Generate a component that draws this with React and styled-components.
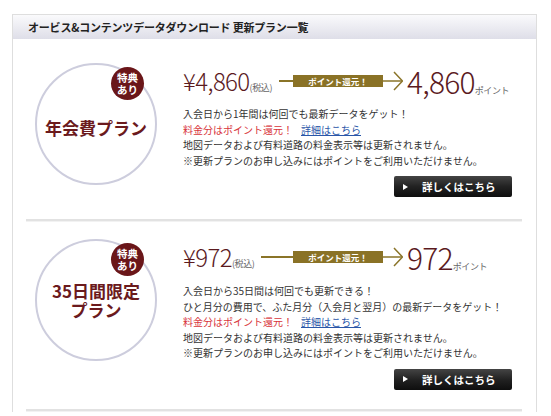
import React from "react";
import styled, { createGlobalStyle } from "styled-components";

const GlobalStyle = createGlobalStyle`
  html, body { margin: 0; padding: 0; background: #fff; }
  body { font-family: "Noto Sans CJK JP", "Noto Sans", sans-serif; color: #333; }
`;

const Page = styled.div`
  padding: 14px 14px 0 12px;
`;

const Panel = styled.div`
  width: 525px;
  box-sizing: border-box;
  border: 1px solid #dedede;
  border-bottom: none;
`;

const Header = styled.div`
  height: 24px;
  line-height: 24px;
  padding-left: 15px;
  background: linear-gradient(#fafafc, #dedee8);
  font-weight: 700;
  font-size: 11px;
  letter-spacing: -0.2px;
  color: #222;
`;

const Body = styled.div`
  padding: 24px 24px 0 22px;
`;

const Row = styled.div`
  display: flex;
  gap: 26px;
`;

const Circle = styled.div`
  position: relative;
  flex: none;
  width: 122px;
  height: 122px;
  box-sizing: border-box;
  border: 2px solid #cdcddd;
  border-radius: 50%;
  display: flex;
  align-items: center;
  justify-content: center;
  padding-top: ${(p) => p.$pt || 0}px;
`;

const PlanTitle = styled.div`
  font-weight: 700;
  font-size: 17px;
  line-height: 19px;
  color: #6b1a1d;
  text-align: center;
`;

const Badge = styled.div`
  position: absolute;
  top: 2px;
  right: 11px;
  width: 33px;
  height: 33px;
  border-radius: 50%;
  background: #6a1619;
  color: #fff;
  font-weight: 700;
  font-size: 10.5px;
  line-height: 12px;
  display: flex;
  flex-direction: column;
  align-items: center;
  justify-content: center;
`;

const Content = styled.div`
  flex: 1;
  padding-top: 2px;
`;

const PriceRow = styled.div`
  display: flex;
  align-items: center;
  height: 32px;
`;

const PriceGroup = styled.div`
  width: 110px;
  display: flex;
  align-items: center;
`;

const Price = styled.div`
  font-size: 24px;
  font-weight: 300;
  line-height: 1;
  letter-spacing: -0.6px;
  color: #5b1a1e;
  white-space: nowrap;
`;

const Small = styled.span`
  font-size: 9px;
  font-weight: 400;
  color: #666;
  letter-spacing: -0.4px;
`;

const GoldLine = styled.div`
  flex: 1;
  height: 2px;
  margin-left: 7px;
  background: #8a7428;
`;

const GoldBox = styled.div`
  width: 90px;
  height: 12px;
  background: #8a7226;
  color: #fff;
  font-weight: 700;
  font-size: 8.5px;
  line-height: 12px;
  text-align: center;
`;

const ArrowSvg = styled.svg`
  display: block;
  flex: none;
`;

const Points = styled.div`
  margin-left: 4px;
  font-size: 30px;
  font-weight: 300;
  line-height: 1;
  letter-spacing: -0.8px;
  color: #5b1a1e;
  white-space: nowrap;
`;

const Lines = styled.div`
  margin-top: ${(p) => p.$mt}px;
  font-size: 10px;
  line-height: 15.5px;
  color: #333;
  white-space: nowrap;
`;

const Red = styled.span`
  color: #d8343a;
`;

const Link = styled.a`
  color: #2a56a8;
  text-decoration: underline;
  margin-left: 8px;
`;

const ButtonRow = styled.div`
  display: flex;
  justify-content: flex-end;
  margin-top: 8px;
`;

const Button = styled.div`
  width: 118px;
  height: 21px;
  border-radius: 2px;
  background: linear-gradient(#444 0%, #222 50%, #0e0e0e 100%);
  color: #fff;
  font-weight: 700;
  font-size: 10.5px;
  line-height: 21px;
  display: flex;
  align-items: center;
  box-sizing: border-box;
  padding-left: 9px;
`;

const Tri = styled.span`
  width: 0;
  height: 0;
  border-left: 5px solid #fff;
  border-top: 3.5px solid transparent;
  border-bottom: 3.5px solid transparent;
  margin-right: 14px;
`;

const Divider = styled.div`
  height: 2px;
  background: #e2e2e2;
  border-bottom: 1px solid #f2f2f2;
  margin: ${(p) => p.$mt}px -10px ${(p) => p.$mb}px -9px;
`;

const Arrow = () => (
  <ArrowSvg width="20" height="20" viewBox="0 0 20 20">
    <line x1="0" y1="10" x2="19" y2="10" stroke="#8a7428" strokeWidth="1.5" />
    <polyline points="11,1 19.5,10 11,19" fill="none" stroke="#8a7428" strokeWidth="1.5" />
  </ArrowSvg>
);

const plans = [
  {
    title: ["年会費プラン"],
    pt: 6,
    price: "¥4,860",
    points: "4,860",
    lines: ["入会日から1年間は何回でも最新データをゲット！"],
    mt: 9,
    dividerTop: 22,
  },
  {
    title: ["35日間限定", "プラン"],
    pt: 0,
    price: "¥972",
    points: "972",
    lines: [
      "入会日から35日間は何回でも更新できる！",
      "ひと月分の費用で、ふた月分（入会月と翌月）の最新データをゲット！",
    ],
    mt: 10,
    dividerTop: 19,
  },
];

export default function App() {
  return (
    <>
      <GlobalStyle />
      <Page>
        <Panel>
          <Header>オービス&amp;コンテンツデータダウンロード 更新プラン一覧</Header>
          <Body>
            {plans.map((p, i) => (
              <React.Fragment key={i}>
                <Row>
                  <Circle $pt={p.pt}>
                    <Badge>
                      <span>特典</span>
                      <span>あり</span>
                    </Badge>
                    <PlanTitle>
                      {p.title.map((t, j) => (
                        <div key={j}>{t}</div>
                      ))}
                    </PlanTitle>
                  </Circle>
                  <Content>
                    <PriceRow>
                      <PriceGroup>
                        <Price>
                          {p.price}
                          <Small>(税込)</Small>
                        </Price>
                        <GoldLine />
                      </PriceGroup>
                      <GoldBox>ポイント還元！</GoldBox>
                      <Arrow />
                      <Points>
                        {p.points}
                        <Small>ポイント</Small>
                      </Points>
                    </PriceRow>
                    <Lines $mt={p.mt}>
                      {p.lines.map((l, j) => (
                        <div key={j}>{l}</div>
                      ))}
                      <div>
                        <Red>料金分はポイント還元！</Red>
                        <Link href="#">詳細はこちら</Link>
                      </div>
                      <div>地図データおよび有料道路の料金表示等は更新されません。</div>
                      <div>※更新プランのお申し込みにはポイントをご利用いただけません。</div>
                    </Lines>
                    <ButtonRow>
                      <Button>
                        <Tri />
                        詳しくはこちら
                      </Button>
                    </ButtonRow>
                  </Content>
                </Row>
                <Divider $mt={p.dividerTop} $mb={17} />
              </React.Fragment>
            ))}
          </Body>
        </Panel>
      </Page>
    </>
  );
}
